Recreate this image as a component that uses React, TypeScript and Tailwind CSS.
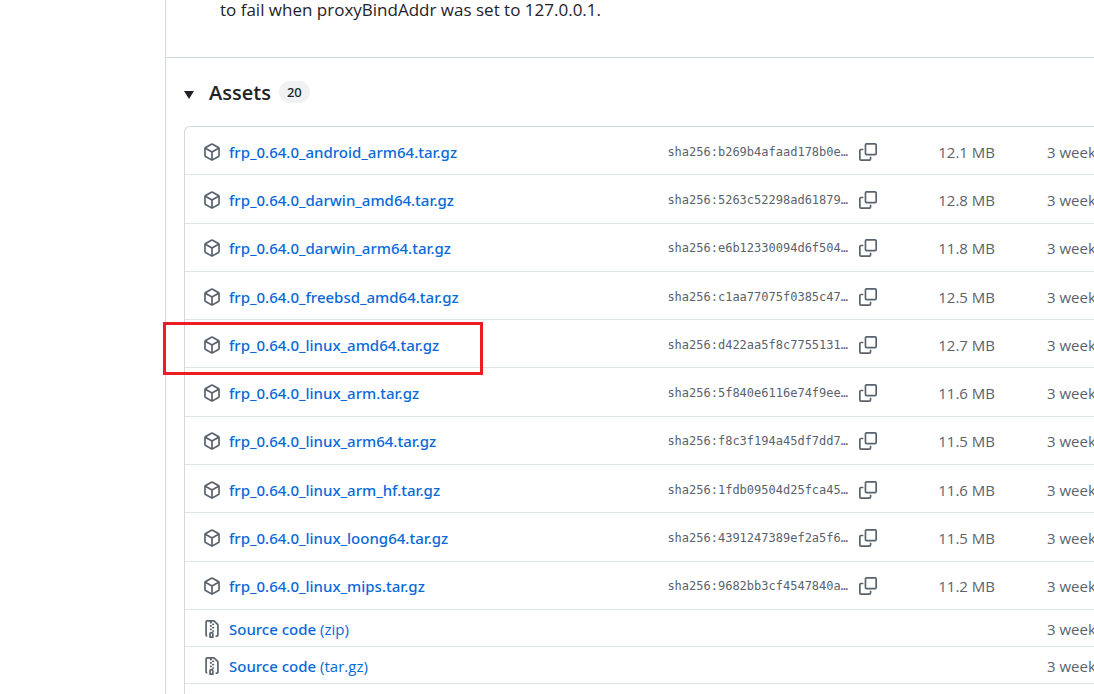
const assets = [
  { name: "frp_0.64.0_android_arm64.tar.gz", digest: "sha256:b269b4afaad178b0e…", size: "12.1 MB" },
  { name: "frp_0.64.0_darwin_amd64.tar.gz", digest: "sha256:5263c52298ad61879…", size: "12.8 MB" },
  { name: "frp_0.64.0_darwin_arm64.tar.gz", digest: "sha256:e6b12330094d6f504…", size: "11.8 MB" },
  { name: "frp_0.64.0_freebsd_amd64.tar.gz", digest: "sha256:c1aa77075f0385c47…", size: "12.5 MB" },
  { name: "frp_0.64.0_linux_amd64.tar.gz", digest: "sha256:d422aa5f8c7755131…", size: "12.7 MB", marked: true },
  { name: "frp_0.64.0_linux_arm.tar.gz", digest: "sha256:5f840e6116e74f9ee…", size: "11.6 MB" },
  { name: "frp_0.64.0_linux_arm64.tar.gz", digest: "sha256:f8c3f194a45df7dd7…", size: "11.5 MB" },
  { name: "frp_0.64.0_linux_arm_hf.tar.gz", digest: "sha256:1fdb09504d25fca45…", size: "11.6 MB" },
  { name: "frp_0.64.0_linux_loong64.tar.gz", digest: "sha256:4391247389ef2a5f6…", size: "11.5 MB" },
  { name: "frp_0.64.0_linux_mips.tar.gz", digest: "sha256:9682bb3cf4547840a…", size: "11.2 MB" },
];

const sources = ["zip", "tar.gz"];

function Icon({ paths }: { paths: string[] }) {
  return (
    <svg viewBox="0 0 16 16" className="size-[18px] shrink-0 fill-[#59636e]" aria-hidden="true">
      {paths.map((d) => (
        <path key={d} d={d} />
      ))}
    </svg>
  );
}

const packagePaths = [
  "m8.878.392 5.25 3.045c.54.314.872.89.872 1.514v6.098a1.75 1.75 0 0 1-.872 1.514l-5.25 3.045a1.75 1.75 0 0 1-1.756 0l-5.25-3.045A1.75 1.75 0 0 1 1 11.049V4.951c0-.624.332-1.201.872-1.514L7.122.392a1.75 1.75 0 0 1 1.756 0ZM7.875 1.69l-4.63 2.685L8 7.133l4.755-2.758-4.63-2.685a.248.248 0 0 0-.25 0ZM2.5 5.677v5.372c0 .09.047.171.125.216l4.625 2.683V8.432Zm6.25 8.271 4.625-2.683a.25.25 0 0 0 .125-.216V5.677L8.75 8.432Z",
];

const copyPaths = [
  "M0 6.75C0 5.784.784 5 1.75 5h1.5a.75.75 0 0 1 0 1.5h-1.5a.25.25 0 0 0-.25.25v7.5c0 .138.112.25.25.25h7.5a.25.25 0 0 0 .25-.25v-1.5a.75.75 0 0 1 1.5 0v1.5A1.75 1.75 0 0 1 9.25 16h-7.5A1.75 1.75 0 0 1 0 14.25Z",
  "M5 1.75C5 .784 5.784 0 6.75 0h7.5C15.216 0 16 .784 16 1.75v7.5A1.75 1.75 0 0 1 14.25 11h-7.5A1.75 1.75 0 0 1 5 9.25Zm1.75-.25a.25.25 0 0 0-.25.25v7.5c0 .138.112.25.25.25h7.5a.25.25 0 0 0 .25-.25v-7.5a.25.25 0 0 0-.25-.25Z",
];

const zipPaths = [
  "M3.5 1.75v11.5c0 .09.048.173.126.217a.75.75 0 0 1-.752 1.298A1.748 1.748 0 0 1 2 13.25V1.75C2 .784 2.784 0 3.75 0h5.586c.464 0 .909.185 1.237.513l2.914 2.914c.329.328.513.773.513 1.237v8.586A1.75 1.75 0 0 1 12.25 15h-.5a.75.75 0 0 1 0-1.5h.5a.25.25 0 0 0 .25-.25V4.664a.25.25 0 0 0-.073-.177L9.513 1.573a.25.25 0 0 0-.177-.073H7.25a.75.75 0 0 1 0 1.5h-.5a.75.75 0 0 1 0-1.5h-3a.25.25 0 0 0-.25.25Zm3.75 8.75h.5c.966 0 1.75.784 1.75 1.75v3a.75.75 0 0 1-.75.75h-2.5a.75.75 0 0 1-.75-.75v-3c0-.966.784-1.75 1.75-1.75ZM6 5.25a.75.75 0 0 1 .75-.75h.5a.75.75 0 0 1 0 1.5h-.5A.75.75 0 0 1 6 5.25Zm.75 2.25h.5a.75.75 0 0 1 0 1.5h-.5a.75.75 0 0 1 0-1.5ZM8 6.75A.75.75 0 0 1 8.75 6h.5a.75.75 0 0 1 0 1.5h-.5A.75.75 0 0 1 8 6.75ZM8.75 3h.5a.75.75 0 0 1 0 1.5h-.5a.75.75 0 0 1 0-1.5ZM8 9.75A.75.75 0 0 1 8.75 9h.5a.75.75 0 0 1 0 1.5h-.5A.75.75 0 0 1 8 9.75Zm-1 2.5v2.25h1v-2.25a.25.25 0 0 0-.25-.25h-.5a.25.25 0 0 0-.25.25Z",
];

function Age() {
  return <span className="w-[47px] shrink-0 overflow-hidden text-[#59636e]">3 weeks ago</span>;
}

export default function App() {
  return (
    <div className="min-h-screen overflow-hidden bg-white pl-[165px] font-['Open_Sans','Noto_Sans',sans-serif] text-[15px] leading-6 text-[#1f2328]">
      <main className="border-l border-[#d1d9e0]">
        <p className="h-[57px] pl-[54px] text-[17px] leading-5">
          to fail when proxyBindAddr was set to 127.0.0.1.
        </p>
        <details open className="border-t border-[#d1d9e0] pl-[18px]">
          <summary className="flex h-[68px] list-none items-center pt-[2px] [&::-webkit-details-marker]:hidden">
            <svg viewBox="0 0 10 8" className="mt-1 h-2 w-[10px] fill-[#1f2328]" aria-hidden="true">
              <path d="M0 0h10L5 8Z" />
            </svg>
            <h2 className="ml-[15px] text-[20px] leading-7 font-semibold">Assets</h2>
            <span className="mb-[2px] ml-2 flex h-[22px] items-center rounded-full bg-[#eff1f3] px-2 font-['Noto_Sans',sans-serif] text-[13px] font-medium">
              20
            </span>
          </summary>
          <div className="whitespace-nowrap rounded-tl-md border-t border-l border-[#d1d9e0]">
            <ul className="grid min-h-[483px] auto-rows-fr">
              {assets.map((asset) => (
                <li key={asset.name} className="relative flex items-center border-b border-[#dfe4e8] pt-[2px] pl-[18px]">
                  <div className="flex min-w-0 flex-1 items-center gap-2">
                    <Icon paths={packagePaths} />
                    <a href="#" className="font-['Noto_Sans',sans-serif] font-medium text-[#0969da]">
                      {asset.name}
                    </a>
                  </div>
                  <code className="mr-[11px] font-['DejaVu_Sans_Mono',monospace] text-xs text-[#59636e]">
                    {asset.digest}
                  </code>
                  <button type="button" aria-label={`Copy digest of ${asset.name}`}>
                    <Icon paths={copyPaths} />
                  </button>
                  <span className="mr-[52px] w-[118px] text-right text-[#59636e]">{asset.size}</span>
                  <Age />
                  {asset.marked && (
                    <span className="pointer-events-none absolute top-[2px] left-[-22px] h-[53px] w-[320px] border-[3px] border-[#ed1c24]" />
                  )}
                </li>
              ))}
            </ul>
            <ul>
              {sources.map((kind) => (
                <li key={kind} className="flex h-[37px] items-center border-b border-[#dfe4e8] pt-[2px] pl-[18px]">
                  <div className="flex min-w-0 flex-1 items-center gap-2">
                    <Icon paths={zipPaths} />
                    <a href="#" className="text-[#0969da]">
                      <span className="font-['Noto_Sans',sans-serif] font-medium">Source code</span> ({kind})
                    </a>
                  </div>
                  <Age />
                </li>
              ))}
            </ul>
            <div className="h-[10px]" />
          </div>
        </details>
      </main>
    </div>
  );
}
